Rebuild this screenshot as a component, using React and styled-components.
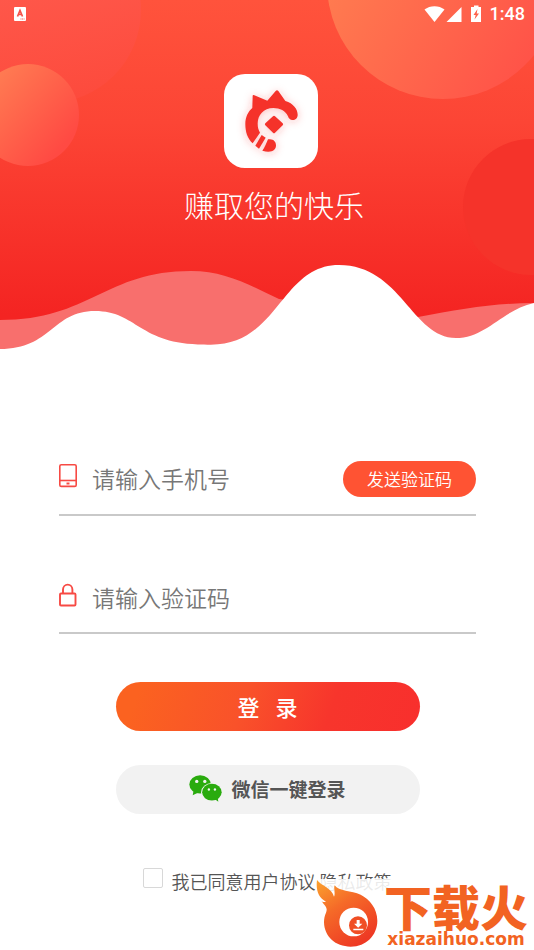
import React from 'react'

import styled, { createGlobalStyle } from 'styled-components'

const GlobalStyle = createGlobalStyle`
  * {
    box-sizing: border-box;
  }
  body {
    margin: 0;
    background: #fff;
    font-family: 'Noto Sans CJK SC', sans-serif;
  }
`
const Page = styled.div`
  position: relative;
  min-height: 100vh;
  overflow: hidden;
  background: #fff;
`
const Hero = styled.header`
  position: relative;
  height: 350px;
`
const Backdrop = styled.svg`
  position: absolute;
  top: 0;
  left: 0;
  width: 100%;
  height: 100%;
`
const StatusBar = styled.div`
  position: relative;
  display: flex;
  align-items: center;
  justify-content: space-between;
  height: 27px;
  padding: 0 9px 0 14px;
`
const StatusIcons = styled.div`
  display: flex;
  align-items: center;
`
const Clock = styled.span`
  margin-left: 9px;
  color: #fff;
  font-family: Roboto, sans-serif;
  font-size: 18px;
  font-weight: 500;
  line-height: 27px;
`
const Brand = styled.div`
  position: relative;
  display: flex;
  flex-direction: column;
  align-items: center;
  padding: 47px 0 0 8px;
`
const AppIcon = styled.svg`
  width: 94px;
  height: 94px;
  border-radius: 21px;
  background: #fff;
`
const Slogan = styled.h1`
  margin: 14px 0 0;
  padding-left: 6px;
  color: #fff;
  font-size: 30px;
  font-weight: 300;
  line-height: 44px;
`
const Form = styled.form`
  display: flex;
  flex-direction: column;
  align-items: center;
  padding: 94px 58px 0 59px;
`
const Field = styled.div`
  display: flex;
  align-items: center;
  width: 100%;
  height: ${({ $height }) => $height}px;
  margin-bottom: 48px;
  border-bottom: 2px solid #c9c9c9;
`
const FieldLabel = styled.label`
  display: flex;
  padding-bottom: 6px;
`
const FieldInput = styled.input`
  flex: 1;
  min-width: 0;
  padding: 0 15px 2px;
  border: 0;
  outline: 0;
  background: none;
  color: #333;
  font-family: inherit;
  font-size: 23px;
  font-weight: 350;
  line-height: 34px;

  &::placeholder {
    color: #777;
    opacity: 1;
  }
`
const SendButton = styled.button`
  height: 36px;
  padding: 0 24px 2px;
  border: 0;
  border-radius: 18px;
  background: #ff5333;
  color: #fff;
  font-family: inherit;
  font-size: 17px;
  font-weight: 350;
`
const PillButton = styled.button`
  display: flex;
  align-items: center;
  justify-content: center;
  gap: ${({ $gap }) => $gap || 0}px;
  width: 304px;
  max-width: 100%;
  height: 49px;
  margin-bottom: 34px;
  padding: 0 0 2px;
  border: 0;
  border-radius: 25px;
  background: ${({ $background }) => $background};
  color: ${({ $color }) => $color};
  font-family: inherit;
  font-size: ${({ $size }) => $size}px;
  font-weight: ${({ $weight }) => $weight};
`
const Agreement = styled.div`
  display: flex;
  align-items: center;
  gap: 8px;
  margin-top: 20px;
  color: #555;
  font-size: 18px;
  font-weight: 350;
  line-height: 26px;
`
const Checkbox = styled.input`
  appearance: none;
  width: 20px;
  height: 20px;
  margin: 0 0 6px;
  border: 1px solid #d8d8d8;
  border-radius: 2px;
  background: #fff;
`
const Terms = styled.a`
  color: inherit;
  text-decoration: none;
`
const Watermark = styled.aside`
  position: absolute;
  right: 0;
  bottom: 0;
  display: flex;
  width: 218px;
  height: 71px;
  background: rgba(255, 255, 255, 0.88);
  color: #f26322;
`
const WatermarkText = styled.div`
  display: flex;
  flex: 1;
  flex-direction: column;
  align-items: center;
  padding-top: 3px;
`
const WatermarkName = styled.strong`
  font-size: 48px;
  font-weight: 900;
  line-height: 46px;
`
const WatermarkSite = styled.span`
  font-family: 'DejaVu Sans', sans-serif;
  font-size: 17px;
  font-weight: 700;
  line-height: 22px;
`

const HeroBackdrop = () => (
  <Backdrop viewBox='0 0 534 350' preserveAspectRatio='none' aria-hidden='true'>
    <defs>
      <linearGradient id='sky' x1='0' y1='0' x2='0' y2='1'>
        <stop offset='0' stopColor='#ff533c' />
        <stop offset='0.35' stopColor='#fc4535' />
        <stop offset='0.9' stopColor='#f42422' />
      </linearGradient>
      <linearGradient id='bubble' x1='0' y1='0.15' x2='0.8' y2='0.85'>
        <stop offset='0' stopColor='#ff8154' />
        <stop offset='1' stopColor='#ff4a43' />
      </linearGradient>
      <linearGradient id='bubbleLarge' x1='0' y1='0.5' x2='0.8' y2='1'>
        <stop offset='0' stopColor='#ff7c50' />
        <stop offset='1' stopColor='#ff5248' />
      </linearGradient>
      <linearGradient id='bubbleFaint' x1='0.5' y1='0' x2='0.7' y2='1'>
        <stop offset='0' stopColor='#ff5f52' />
        <stop offset='1' stopColor='#fd4a3c' />
      </linearGradient>
    </defs>
    <rect width='534' height='350' fill='url(#sky)' />
    <circle cx='48' cy='10' r='93' fill='url(#bubbleFaint)' />
    <circle cx='28' cy='115' r='51' fill='url(#bubble)' />
    <circle cx='443' cy='-17' r='116' fill='url(#bubbleLarge)' />
    <circle cx='531' cy='207' r='68' fill='#f5332a' />
    <path
      fill='#f86f6d'
      d='M0 320C90 320 105 271 191 271C225 271 250 285 279 299L418 317C460 309 495 303 534 303V350H0Z'
    />
    <path
      fill='#fff'
      d='M0 349C52 349 52 311 95 311C137 311 139 344.500 204 344.500C279 350 279 265 339 265C401 265 412 338 456 338C486 338 502 310 534 303V350H0Z'
    />
  </Backdrop>
)

const CatMark = () => (
  <AppIcon viewBox='42 42 282 282' role='img' aria-label='logo'>
    <defs>
      <filter id='glow' x='-40%' y='-40%' width='180%' height='180%'>
        <feDropShadow dx='0' dy='4' stdDeviation='13' floodColor='#f5332a' floodOpacity='0.3' />
      </filter>
    </defs>
    <g fill='#f5302a' filter='url(#glow)'>
      <path d='M128 108Q128 103 133 106L172 122L197 93Q201 88 205 93L226 123C250 130 263 148 263 164C263 174 256 180 248 180C240 180 236 175 234 169C227 152 210 144 190 144C160 144 143 166 143 190C143 203 145 210 150 218L128 250C112 235 106 215 106 192C106 172 114 155 127 144Z' />
      <path d='M189 169Q192 166 195 169L218 190Q221 193 218 196L195 218Q192 221 189 218L166 196Q163 193 166 190Z' />
      <path d='M155 225L167 233L147 266L136 257Z' />
      <path d='M174 238C190 235 198 245 198 256C198 272 182 280 157 272C165 262 168 251 174 238Z' />
    </g>
  </AppIcon>
)

const PhoneIcon = () => (
  <svg width='18' height='24' viewBox='0 0 18 24' fill='none' stroke='#f74a44' strokeWidth='1.600'>
    <rect x='0.800' y='0.800' width='16.400' height='21.600' rx='1.500' />
    <path d='M1 16.500h16' />
    <path d='M7.500 19.500h3' strokeWidth='2' />
  </svg>
)

const LockIcon = () => (
  <svg width='18' height='24' viewBox='0 0 18 24' fill='none' stroke='#f74a44' strokeWidth='1.900'>
    <rect x='1' y='10.500' width='15.500' height='12' rx='1' />
    <path d='M4 10.500V6.500a4.700 4.900 0 0 1 9.400 0V10.500' />
  </svg>
)

const WechatIcon = () => (
  <svg width='33' height='27' viewBox='30 34 98 80' aria-hidden='true'>
    <g fill='#2aab0e'>
      <ellipse cx='63' cy='62' rx='32' ry='27' />
      <path d='M44 78L41 94L58 86Z' />
    </g>
    <ellipse cx='98' cy='85' rx='32' ry='27' fill='#f2f2f2' />
    <g fill='#2aab0e'>
      <ellipse cx='98' cy='85' rx='29' ry='25' />
      <path d='M104 104L117 113L115 98Z' />
    </g>
    <g fill='#f2f2f2'>
      <circle cx='53' cy='53' r='5' />
      <circle cx='77' cy='53' r='5' />
      <circle cx='89' cy='77' r='3.500' />
      <circle cx='107' cy='77' r='3.500' />
    </g>
  </svg>
)

const FlameLogo = () => (
  <svg width='62' height='71' viewBox='14 7 186 213' aria-hidden='true'>
    <defs>
      <linearGradient id='flame' x1='0' y1='0' x2='0.600' y2='1'>
        <stop offset='0' stopColor='#fba32f' />
        <stop offset='0.450' stopColor='#f56a28' />
        <stop offset='1' stopColor='#ee3a24' />
      </linearGradient>
    </defs>
    <path
      fill='url(#flame)'
      d='M17 10C13 42 22 62 44 75C36 77 33 75 30 72C42 90 50 92 44 108C40 118 38 125 38 137C39 180 72 210 118 210C165 210 198 175 198 132C198 95 175 68 148 54C120 42 82 44 70 26C66 36 73 50 68 60C62 34 30 28 17 10Z'
    />
    <circle cx='127' cy='136' r='43' fill='#fff' />
    <circle cx='140' cy='146' r='27' fill='#f04e24' />
    <path fill='#fff' d='M136 130h9v11h8L140.500 153L128 141h8ZM126 156h30v5h-30Z' />
  </svg>
)

const Status = () => (
  <StatusBar>
    <svg width='12' height='14' viewBox='0 0 12 14' aria-hidden='true'>
      <rect y='0' width='12' height='14' rx='1' fill='#fff' />
      <path d='M3.500 9.500L6 3.500L8.500 9.500M4.500 7.500h3' fill='none' stroke='#f5534a' strokeWidth='1.700' />
      <path d='M6.500 12h4' stroke='#f5534a' strokeDasharray='1 0.600' />
    </svg>
    <StatusIcons>
      <svg width='57' height='18' viewBox='424 4 57 18' fill='#fff' aria-hidden='true'>
        <path d='M424.500 8.500C430 4 439 4 444.500 8.500L434.500 21Z' />
        <path d='M461.500 6V21H446.500Z' />
        <path
          fillRule='evenodd'
          d='M474 4.500h4.500V6H481v15h-10V6h3ZM477.500 8L473.500 14h2.200L474.500 18.500L479 12.500h-2.300Z'
        />
      </svg>
      <Clock>1:48</Clock>
    </StatusIcons>
  </StatusBar>
)

const App = () => {
  return (
    <Page>
      <GlobalStyle />
      <Hero>
        <HeroBackdrop />
        <Status />
        <Brand>
          <CatMark />
          <Slogan>赚取您的快乐</Slogan>
        </Brand>
      </Hero>
      <Form onSubmit={(e) => e.preventDefault()}>
        <Field $height={72}>
          <FieldLabel htmlFor='phone' aria-label='手机号'>
            <PhoneIcon />
          </FieldLabel>
          <FieldInput id='phone' type='tel' placeholder='请输入手机号' />
          <SendButton type='button'>发送验证码</SendButton>
        </Field>
        <Field $height={70}>
          <FieldLabel htmlFor='code' aria-label='验证码'>
            <LockIcon />
          </FieldLabel>
          <FieldInput id='code' type='text' placeholder='请输入验证码' />
        </Field>
        <PillButton
          type='submit'
          aria-label='登录'
          $gap={16}
          $size={22}
          $weight={500}
          $color='#fff'
          $background='linear-gradient(110deg, #fb6220 8%, #f9522a 42%, #f7352c 70%, #f82f2d)'
        >
          <span>登</span>
          <span>录</span>
        </PillButton>
        <PillButton
          type='button'
          $gap={9}
          $size={19}
          $weight={700}
          $color='#555'
          $background='#f2f2f2'
        >
          <WechatIcon />
          微信一键登录
        </PillButton>
        <Agreement>
          <Checkbox id='agree' type='checkbox' />
          <span>
            <label htmlFor='agree'>我已同意</label>
            <Terms href='#terms'>用户协议</Terms>
            {' '}
            <Terms href='#privacy'>隐私政策</Terms>
          </span>
        </Agreement>
      </Form>
      <Watermark>
        <FlameLogo />
        <WatermarkText>
          <WatermarkName>下载火</WatermarkName>
          <WatermarkSite>xiazaihuo.com</WatermarkSite>
        </WatermarkText>
      </Watermark>
    </Page>
  )
}

export default App
